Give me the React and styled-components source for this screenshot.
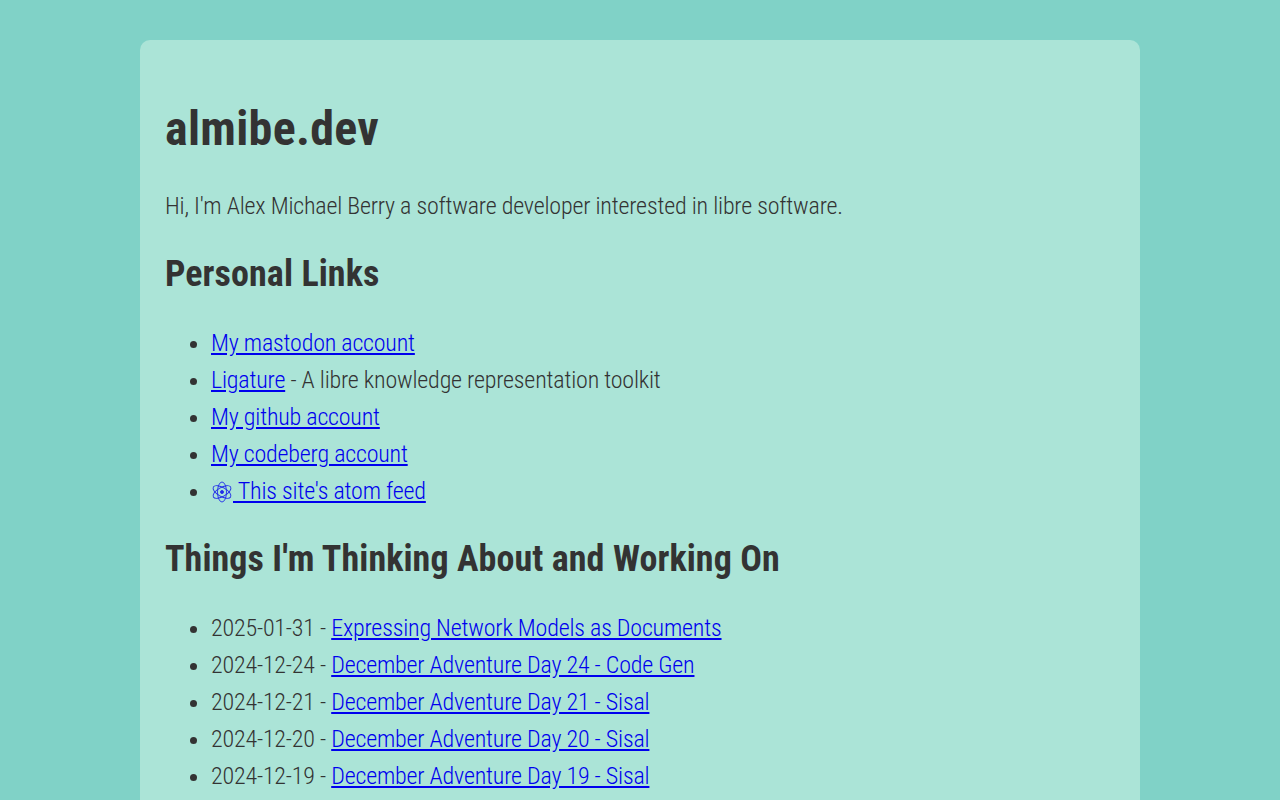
import React from 'react';
import styled, { createGlobalStyle } from 'styled-components';

const GlobalStyle = createGlobalStyle`
  html, body {
    margin: 0;
    background: #80d2c7;
    overflow: hidden;
  }
`;

const Card = styled.main`
  box-sizing: border-box;
  width: 1000px;
  margin: 40px auto;
  padding: 25px;
  background: #abe4d7;
  border-radius: 10px;
  color: #333;
  font-family: "Roboto Condensed", Roboto, sans-serif;
  font-weight: 300;
  font-size: 24px;
  line-height: 37px;
  letter-spacing: -0.2px;
`;

const Title = styled.h1`
  margin: 34px 0 29px;
  font-size: 48px;
  line-height: 60px;
  font-weight: 700;
  letter-spacing: 0.3px;
`;

const Intro = styled.p`
  margin: 0;
`;

const SectionTitle = styled.h2`
  margin: 24px 0 26px;
  font-size: 36px;
  line-height: 50px;
  font-weight: 700;
  letter-spacing: 0.08px;
`;

const List = styled.ul`
  margin: 0;
  padding-left: 46px;
`;

const Item = styled.li``;

const Link = styled.a`
  color: #00e;
  text-decoration: underline;
`;

const AtomSvg = styled.svg`
  width: 22px;
  height: 22px;
  vertical-align: -4px;
  fill: none;
  stroke: currentColor;
  stroke-width: 0.9;
  opacity: 0.8;
`;

const AtomIcon = () => (
  <AtomSvg viewBox="0 0 22 22">
    <ellipse cx="11" cy="11" rx="10" ry="4.5" transform="rotate(90 11 11)" />
    <ellipse cx="11" cy="11" rx="10" ry="4.5" transform="rotate(30 11 11)" />
    <ellipse cx="11" cy="11" rx="10" ry="4.5" transform="rotate(150 11 11)" />
    <circle cx="11" cy="11" r="1.5" fill="currentColor" />
  </AtomSvg>
);

const posts = [
  ['2025-01-31', 'Expressing Network Models as Documents'],
  ['2024-12-24', 'December Adventure Day 24 - Code Gen'],
  ['2024-12-21', 'December Adventure Day 21 - Sisal'],
  ['2024-12-20', 'December Adventure Day 20 - Sisal'],
  ['2024-12-19', 'December Adventure Day 19 - Sisal'],
];

export default function App() {
  return (
    <>
      <GlobalStyle />
      <Card>
        <Title>almibe.dev</Title>
        <Intro>Hi, I'm Alex Michael Berry a software developer interested in libre software.</Intro>
        <SectionTitle>Personal Links</SectionTitle>
        <List>
          <Item><Link href="#">My mastodon account</Link></Item>
          <Item><Link href="#">Ligature</Link> - A libre knowledge representation toolkit</Item>
          <Item><Link href="#">My github account</Link></Item>
          <Item><Link href="#">My codeberg account</Link></Item>
          <Item><Link href="#"><AtomIcon /> This site's atom feed</Link></Item>
        </List>
        <SectionTitle>Things I'm Thinking About and Working On</SectionTitle>
        <List>
          {posts.map(([date, title]) => (
            <Item key={date}>{date} - <Link href="#">{title}</Link></Item>
          ))}
        </List>
      </Card>
    </>
  );
}
